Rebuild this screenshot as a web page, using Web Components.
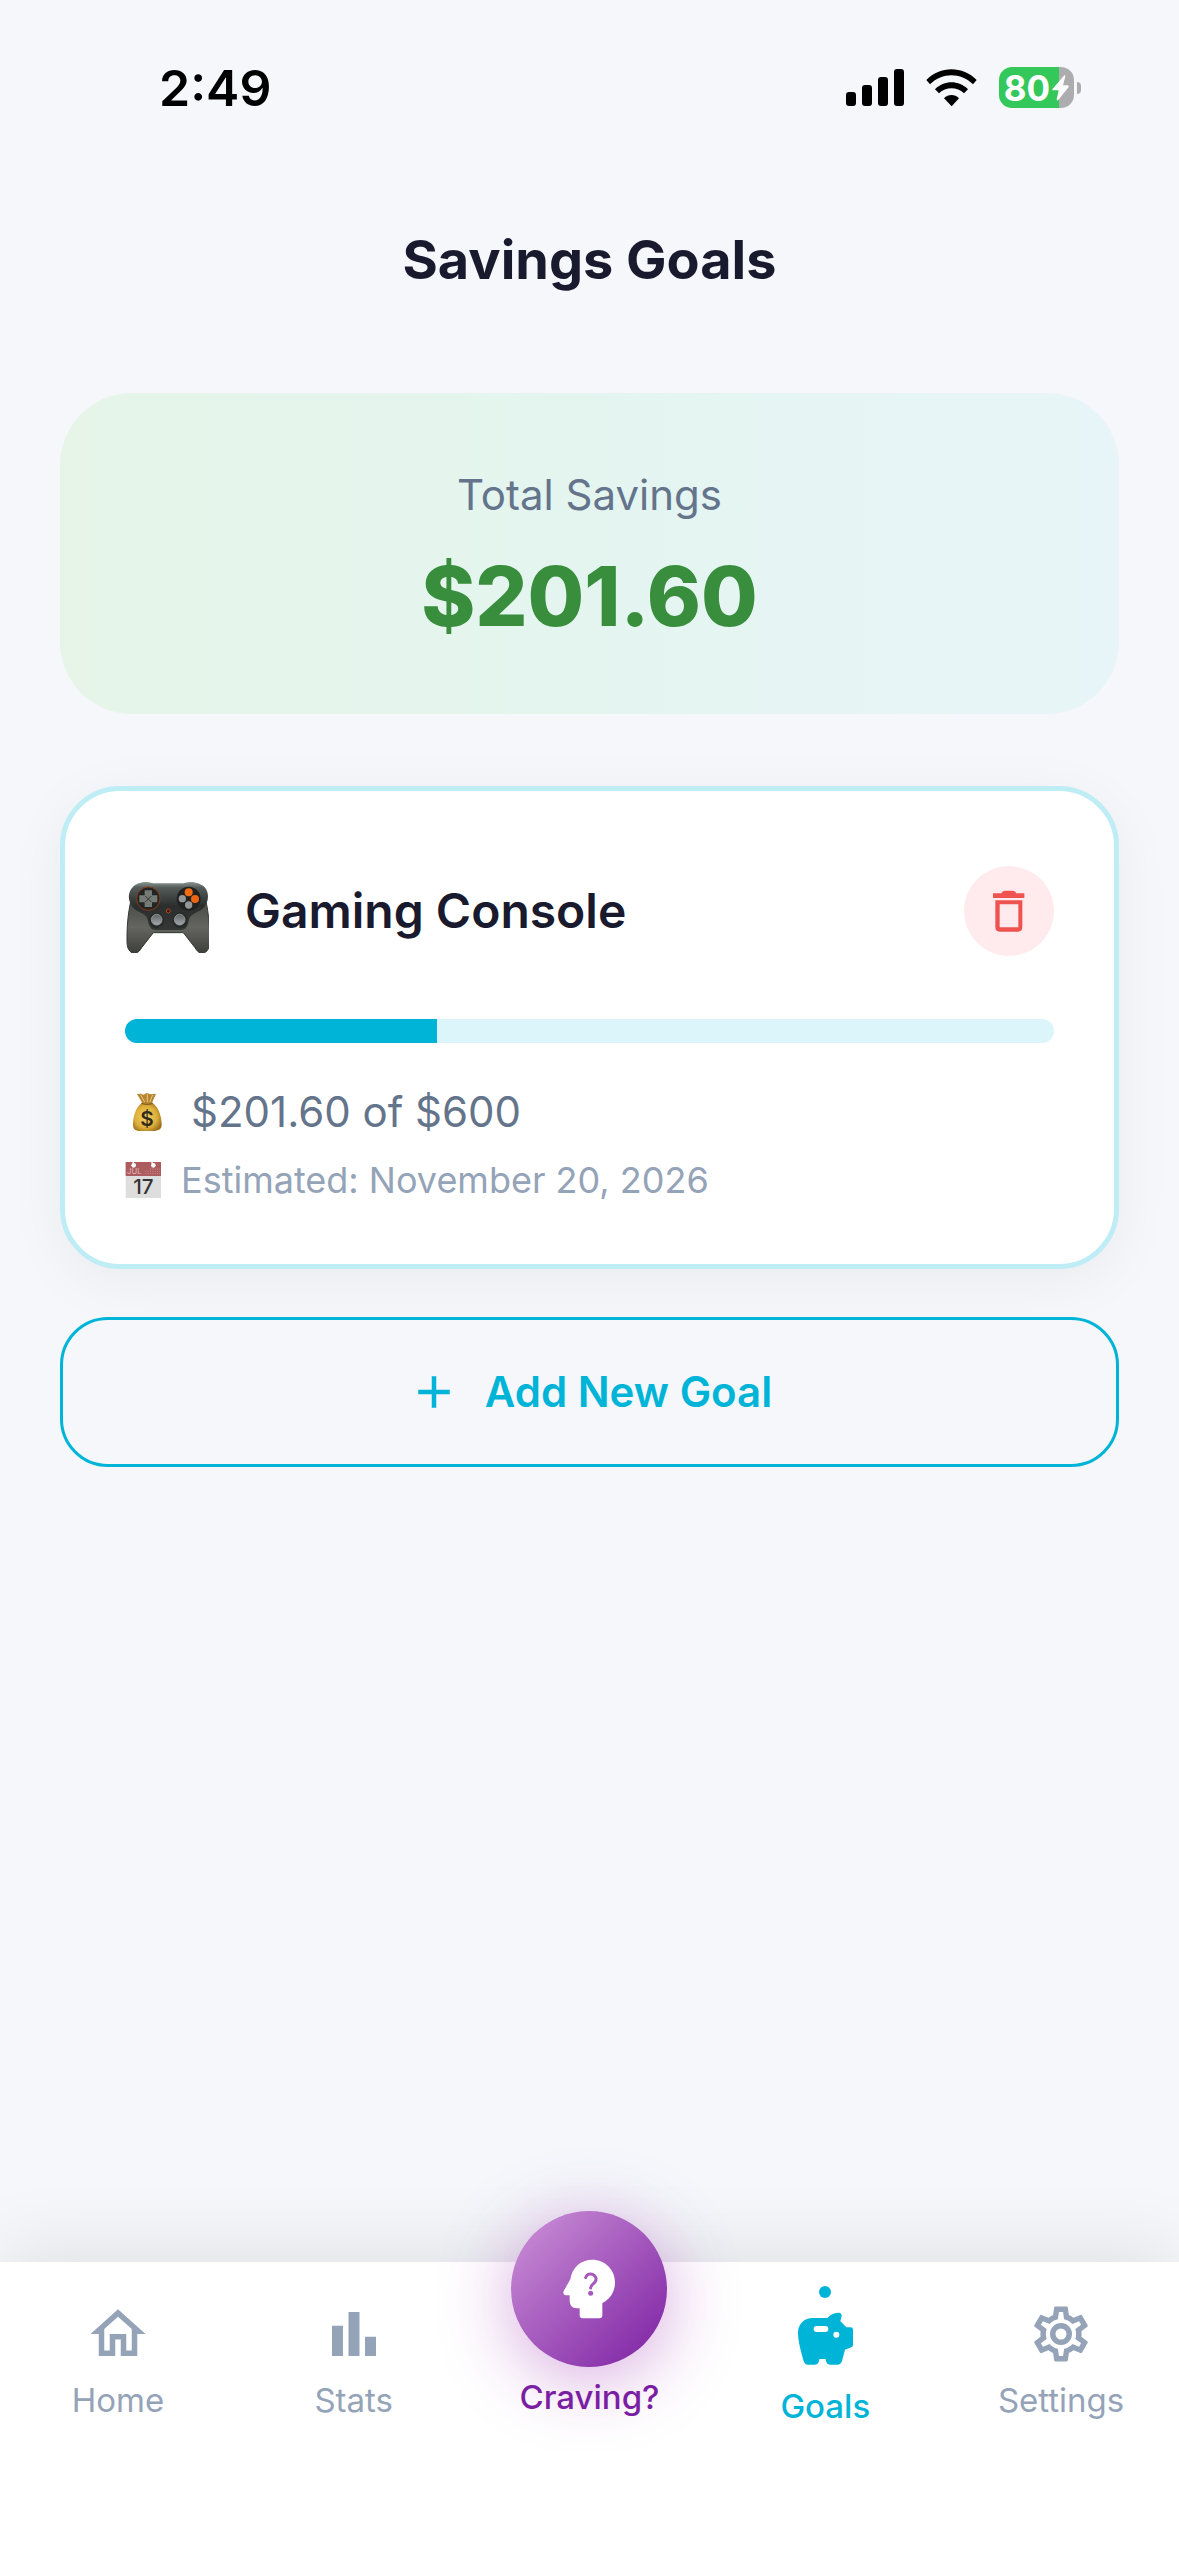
<!DOCTYPE html>
<html lang="en">
<head>
<meta charset="utf-8">
<meta name="viewport" content="width=device-width, initial-scale=1">
<title>Savings Goals</title>
<style>
    html {
        --bg: #f5f7fb;
        --ink: #1a1a2e;
        --slate: #64748b;
        --muted: #94a3b8;
        --accent: #00b4d8;
        --purple: #7b1fa2;
        --green: #388e3c;
        --gutter: 60px;
    }
    body {
        margin: 0;
        background: var(--bg);
        color: var(--ink);
        font-family: Inter, "Liberation Sans", sans-serif;
    }
</style>
</head>
<body>
<savings-app>
    <status-bar slot="status" time="2:49" battery="80"></status-bar>
    <span slot="title">Savings Goals</span>
    <total-card amount="$201.60">Total Savings</total-card>
    <goal-card icon="gamepad" value="201.60" max="600" saved="$201.60 of $600" estimate="Estimated: November 20, 2026">Gaming Console</goal-card>
    <add-button>Add New Goal</add-button>
    <tab-bar slot="tabs">
        <tab-item icon="home" href="#home">Home</tab-item>
        <tab-item icon="stats" href="#stats">Stats</tab-item>
        <tab-item icon="head" href="#craving" raised>Craving?</tab-item>
        <tab-item icon="piggy" href="#goals" active>Goals</tab-item>
        <tab-item icon="cog" href="#settings">Settings</tab-item>
    </tab-bar>
</savings-app>

<script>
const icons = {
    home: ['0 0 24 24', `<path fill="currentColor" d="M12 5.69L17 10.19V18H15V12H9V18H7V10.19L12 5.69M12 3L2 12H5V20H11V14H13V20H19V12H22"/>`],
    stats: ['0 0 24 24', `<path fill="currentColor" d="M4 9h4v11H4zM10 4h4v16h-4zM16 13h4v7h-4z"/>`],
    cog: ['0 0 24 24', `<path fill="currentColor" d="M12,8A4,4 0 0,1 16,12A4,4 0 0,1 12,16A4,4 0 0,1 8,12A4,4 0 0,1 12,8M12,10A2,2 0 0,0 10,12A2,2 0 0,0 12,14A2,2 0 0,0 14,12A2,2 0 0,0 12,10M10,22C9.75,22 9.54,21.82 9.5,21.58L9.13,18.93C8.5,18.68 7.96,18.34 7.44,17.94L4.95,18.95C4.73,19.03 4.46,18.95 4.34,18.73L2.34,15.27C2.21,15.05 2.27,14.78 2.46,14.63L4.57,12.97L4.5,12L4.57,11L2.46,9.37C2.27,9.22 2.21,8.95 2.34,8.73L4.34,5.27C4.46,5.05 4.73,4.96 4.95,5.05L7.44,6.05C7.96,5.66 8.5,5.32 9.13,5.07L9.5,2.42C9.54,2.18 9.75,2 10,2H14C14.25,2 14.46,2.18 14.5,2.42L14.87,5.07C15.5,5.32 16.04,5.66 16.56,6.05L19.05,5.05C19.27,4.96 19.54,5.05 19.66,5.27L21.66,8.73C21.79,8.95 21.73,9.22 21.54,9.37L19.43,11L19.5,12L19.43,13L21.54,14.63C21.73,14.78 21.79,15.05 21.66,15.27L19.66,18.73C19.54,18.95 19.27,19.04 19.05,18.95L16.56,17.95C16.04,18.34 15.5,18.68 14.87,18.93L14.5,21.58C14.46,21.82 14.25,22 14,22H10M11.25,4L10.88,6.61C9.68,6.86 8.62,7.5 7.85,8.39L5.44,7.35L4.69,8.65L6.8,10.2C6.4,11.37 6.4,12.64 6.8,13.8L4.68,15.36L5.43,16.66L7.86,15.62C8.63,16.5 9.68,17.14 10.87,17.38L11.24,20H12.76L13.13,17.39C14.32,17.14 15.37,16.5 16.14,15.62L18.57,16.66L19.32,15.36L17.2,13.81C17.6,12.64 17.6,11.37 17.2,10.2L19.31,8.65L18.56,7.35L16.15,8.39C15.38,7.5 14.32,6.86 13.12,6.62L12.75,4H11.25Z"/>`],
    plus: ['0 0 24 24', `<path fill="currentColor" d="M19 13h-6v6h-2v-6H5v-2h6V5h2v6h6z"/>`],
    trash: ['848 341 162 162', `<path fill="currentColor" fill-rule="evenodd" d="M881 369H906Q909 361 916 361H941Q948 361 951 369H975V383H881ZM888 390H969V470Q969 484 956 484H901Q888 484 888 470ZM901 402V471H957V402Z"/>`],
    head: ['442 201 252 252', `
        <path fill="currentColor" d="M578 239C544 239 517 262 512 298L492 333C489 340 493 346 499 346H510V361C510 376 518 385 531 385H540V406Q540 415 549 415H599Q608 415 608 406V369C631 358 646 335 646 307C646 269 616 239 578 239Z"/>
        <path fill="none" stroke="#a658bb" stroke-width="9" stroke-linecap="round" d="M558 293C562 280 574 281 579 283C589 287 592 298 586 306C580 313 573 315 573 324"/>
        <circle cx="573" cy="340" r="7.5" fill="#a658bb"/>`],
    piggy: ['126 201 198 198', `<path fill="currentColor" fill-rule="evenodd" d="M188 234H232C241 223 254 218 267 218Q275 219 275 228L271 244L289 262H302Q309 262 309 269V315Q309 320 304 322L285 329L276 363Q273 374 262 374H240Q228 374 227 357H208Q207 374 195 374H174Q164 374 161 363C155 342 144 305 144 278C144 252 163 234 188 234ZM200 258A8.500 8.500 0 0 0 200 276H226A8.500 8.500 0 0 0 226 258ZM259 275A9 9 0 1 0 259 293A9 9 0 1 0 259 275Z"/>`],
    gamepad: ['75 57 252 252', `
        <defs>
            <linearGradient id="grip" x1="0" y1="0" x2="0" y2="1"><stop offset="0" stop-color="#3a3d3a"/><stop offset=".6" stop-color="#64655f"/><stop offset="1" stop-color="#3d3f3b"/></linearGradient>
            <linearGradient id="body" x1="0" y1="0" x2="0" y2="1"><stop offset="0" stop-color="#8c9894"/><stop offset=".12" stop-color="#545b58"/><stop offset=".5" stop-color="#2b2e2d"/><stop offset="1" stop-color="#343736"/></linearGradient>
            <linearGradient id="stick" x1="0" y1="0" x2="0" y2="1"><stop offset="0" stop-color="#5c6264"/><stop offset="1" stop-color="#a5abac"/></linearGradient>
        </defs>
        <path fill="url(#grip)" stroke="#353733" stroke-width="3" d="M104 116C90 150 80 205 81 275C81 300 93 312 108 309C116 307 120 301 125 293L160 248H250L285 293C290 301 294 307 302 309C317 312 329 300 329 275C330 205 320 150 306 116Z"/>
        <path fill="url(#body)" d="M98 112C104 102 130 93 146 97L160 100H250L264 97C280 93 306 102 314 112C330 130 326 160 307 177C290 190 270 190 266 212C262 238 250 240 238 240H172C160 240 148 238 144 212C140 190 120 190 103 177C84 160 80 130 98 112Z"/>
        <circle cx="145" cy="146" r="35" fill="#222524" stroke="#973f13" stroke-width="2.500"/>
        <path fill="#747a76" d="M134 121H156V136H172V157H156V171H134V157H118V136H134Z"/>
        <path stroke="#313532" stroke-width="3" d="M136 138L154 156M154 138L136 156"/>
        <circle cx="266" cy="146" r="36" fill="#202221"/>
        <circle cx="266" cy="127" r="12" fill="#f36b13"/><circle cx="285" cy="147" r="12" fill="#ee6410"/>
        <circle cx="247" cy="146" r="11" fill="#949596"/><circle cx="266" cy="165" r="11" fill="#949596"/>
        <circle cx="205" cy="183" r="6" fill="#321b12" stroke="#b54a17" stroke-width="3"/>
        <circle cx="170" cy="211" r="23" fill="#272a29"/><circle cx="240" cy="211" r="23" fill="#272a29"/>
        <circle cx="170" cy="209" r="16" fill="url(#stick)" stroke="#8f9594" stroke-width="3"/>
        <circle cx="239" cy="209" r="16" fill="url(#stick)" stroke="#8f9594" stroke-width="3"/>`],
    money: ['75 63 126 126', `
        <defs>
            <radialGradient id="sack" cx=".45" cy=".5" r=".6"><stop offset="0" stop-color="#f4d564"/><stop offset=".65" stop-color="#dcae39"/><stop offset="1" stop-color="#9b6d1a"/></radialGradient>
        </defs>
        <path fill="#b78634" d="M111 72L122 71L130 74L141 69L151 73L168 71L156 99H127Z"/>
        <path fill="none" stroke="#ebc979" stroke-width="3" d="M122 75L134 96M142 73V96M158 75L149 96"/>
        <path fill="url(#sack)" d="M126 99H157C172 108 184 132 185 161C186 178 176 182 158 183H121C105 182 98 176 99 161C100 132 111 108 126 99Z"/>
        <path fill="none" stroke="#8a611f" stroke-width="4" stroke-linecap="round" d="M126 100Q141 106 157 100"/>
        <text x="141" y="167" text-anchor="middle" font-size="62" font-weight="600" fill="#33291d">$</text>`],
    calendar: ['76 276 108 108', `
        <path fill="#dedede" d="M78 276H185V384H78Z"/>
        <path fill="#ac5b5e" d="M78 276H185V318H78Z"/>
        <circle cx="102" cy="286" r="7" fill="#fff"/><circle cx="161" cy="286" r="7" fill="#fff"/>
        <path stroke="#fff" stroke-width="4" d="M101 276V286M156 276L161 286"/>
        <path stroke="#c98b8d" stroke-width="3" stroke-dasharray="3 4" d="M137 311H181M137 304H181M151 297H181"/>
        <text x="104" y="312" text-anchor="middle" font-size="23" fill="#e2b9ba">JUL</text>
        <text x="131" y="373" text-anchor="middle" font-size="62" font-weight="500" fill="#333">17</text>`],
    signal: ['0 0 58 38', `<rect y="23" width="10" height="14" rx="3"/><rect x="16" y="16" width="10" height="21" rx="3"/><rect x="32" y="8" width="10" height="29" rx="3"/><rect x="48" width="10" height="37" rx="3"/>`],
    wifi: ['318 86 153 114', `
        <path d="M319 119C360 76 429 76 470 119L459 132C422 96 367 96 330 132Z"/>
        <path d="M345 147C373 119 416 119 444 147L432 159C411 139 378 139 357 159Z"/>
        <path d="M372 174C385 161 404 161 417 174L395 198Z"/>`],
    bolt: ['697 107 51 76', `<path fill="#fff" d="M734 107L698 149Q697 152 701 152H717L711 179Q711 184 716 181L747 142Q748 138 744 137H730L737 110Q737 105 734 107Z"/>`],
};

class BaseElement extends HTMLElement {
    constructor() {
        super();
        this.attachShadow({ mode: 'open' });
    }
    connectedCallback() {
        this.shadowRoot.innerHTML = `<style>* { box-sizing: border-box; }${this.css()}</style>${this.html()}`;
    }
    attr(name) {
        return this.getAttribute(name) || '';
    }
}

customElements.define('app-icon', class extends BaseElement {
    css() {
        return `
            :host { display: block; flex: none; }
            svg { display: block; width: 100%; height: 100%; }
        `;
    }
    html() {
        const [box, shapes] = icons[this.attr('name')];
        return `<svg viewBox="${box}" aria-hidden="true">${shapes}</svg>`;
    }
});

customElements.define('savings-app', class extends BaseElement {
    css() {
        return `
            :host { display: flex; flex-direction: column; min-height: 100vh; }
            header { padding: 50px var(--gutter) 46px; }
            h1 { margin: 0; font-size: 54px; line-height: 66px; font-weight: 700; text-align: center; }
            main { flex: 1; display: flex; flex-direction: column; padding: 54px var(--gutter); }
        `;
    }
    html() {
        return `
            <slot name="status"></slot>
            <header><h1><slot name="title"></slot></h1></header>
            <main><slot></slot></main>
            <slot name="tabs"></slot>
        `;
    }
});

customElements.define('status-bar', class extends BaseElement {
    css() {
        return `
            :host {
                display: flex;
                align-items: center;
                justify-content: space-between;
                height: 177px;
                padding: 0 98px 2px 159px;
                box-sizing: border-box;
                color: #000;
            }
            time { font-size: 50px; line-height: 60px; font-weight: 600; }
            .side { display: flex; align-items: center; }
            .signal { width: 58px; height: 38px; margin-right: 22px; }
            .wifi { width: 51px; height: 38px; margin-right: 22px; }
            .battery {
                display: flex;
                align-items: center;
                justify-content: center;
                gap: 2px;
                width: 75px;
                height: 41px;
                border-radius: 13px;
                background: linear-gradient(90deg, #34c759 80%, #adadaf 80%);
                color: #fff;
                font-size: 35px;
                font-weight: 700;
            }
            .bolt { width: 17px; height: 26px; }
            .nub { width: 4px; height: 12px; margin-left: 3px; border-radius: 0 6px 6px 0; background: #adadaf; }
        `;
    }
    html() {
        return `
            <time>${this.attr('time')}</time>
            <div class="side">
                <app-icon class="signal" name="signal"></app-icon>
                <app-icon class="wifi" name="wifi"></app-icon>
                <div class="battery"><span>${this.attr('battery')}</span><app-icon class="bolt" name="bolt"></app-icon></div>
                <div class="nub"></div>
            </div>
        `;
    }
});

customElements.define('total-card', class extends BaseElement {
    css() {
        return `
            :host {
                display: flex;
                flex-direction: column;
                align-items: center;
                gap: 21px;
                padding: 72px 60px 66px;
                border-radius: 72px;
                background: linear-gradient(90deg, #e6f5e8, #e4f5f0 50%, #e8f5f8);
            }
            .label { font-size: 42px; line-height: 60px; color: var(--slate); }
            .amount { font-size: 82px; line-height: 102px; font-weight: 800; color: var(--green); }
        `;
    }
    html() {
        return `
            <div class="label"><slot></slot></div>
            <div class="amount">${this.attr('amount')}</div>
        `;
    }
});

customElements.define('goal-card', class extends BaseElement {
    css() {
        return `
            :host {
                display: block;
                margin-top: 72px;
                padding: 60px;
                border: 5px solid #bfedf5;
                border-radius: 60px;
                background: #fff;
                box-shadow: 0 12px 60px rgba(0, 0, 0, 0.05);
            }
            .head { display: flex; align-items: center; gap: 36px; min-height: 120px; }
            .picture { width: 84px; height: 84px; }
            h2 { flex: 1; margin: 0; font-size: 48px; line-height: 60px; font-weight: 600; }
            button {
                display: grid;
                place-items: center;
                width: 90px;
                height: 90px;
                padding: 0;
                border: 0;
                border-radius: 50%;
                background: #ffebee;
                color: #ef5350;
            }
            button app-icon { width: 54px; height: 54px; }
            progress {
                display: block;
                width: 100%;
                height: 24px;
                margin: 48px 0 39px;
                border-radius: 12px;
                overflow: hidden;
                appearance: none;
            }
            progress::-webkit-progress-bar { background: #dcf5fa; }
            progress::-webkit-progress-value { background: var(--accent); }
            .row { display: flex; align-items: center; }
            .saved { gap: 24px; font-size: 42px; line-height: 60px; color: var(--slate); }
            .saved app-icon { width: 42px; height: 42px; }
            .estimate { gap: 20px; margin-top: 14px; font-size: 36px; line-height: 48px; color: var(--muted); }
            .estimate app-icon { width: 36px; height: 36px; }
        `;
    }
    html() {
        return `
            <div class="head">
                <app-icon class="picture" name="${this.attr('icon')}"></app-icon>
                <h2><slot></slot></h2>
                <button type="button" aria-label="Delete goal"><app-icon name="trash"></app-icon></button>
            </div>
            <progress value="${this.attr('value')}" max="${this.attr('max')}" aria-label="Goal progress"></progress>
            <div class="row saved"><app-icon name="money"></app-icon><span>${this.attr('saved')}</span></div>
            <div class="row estimate"><app-icon name="calendar"></app-icon><span>${this.attr('estimate')}</span></div>
        `;
    }
});

customElements.define('add-button', class extends BaseElement {
    css() {
        return `
            :host { display: block; margin-top: 48px; }
            button {
                display: flex;
                align-items: center;
                justify-content: center;
                gap: 24px;
                width: 100%;
                min-height: 150px;
                border: 3px solid var(--accent);
                border-radius: 48px;
                background: var(--bg);
                color: var(--accent);
                font: 600 42px/60px Inter, "Liberation Sans", sans-serif;
            }
            app-icon { width: 54px; height: 54px; }
        `;
    }
    html() {
        return `<button type="button"><app-icon name="plus"></app-icon><span><slot></slot></span></button>`;
    }
});

customElements.define('tab-bar', class extends BaseElement {
    css() {
        return `
            :host { display: block; background: #fff; box-shadow: 0 -12px 72px rgba(0, 0, 0, 0.09); }
            nav { display: grid; grid-template-columns: repeat(5, 1fr); padding-bottom: 130px; }
        `;
    }
    html() {
        return `<nav><slot></slot></nav>`;
    }
});

customElements.define('tab-item', class extends BaseElement {
    css() {
        return `
            :host { display: block; color: var(--muted); font-size: 33px; line-height: 40px; }
            a {
                display: flex;
                flex-direction: column;
                align-items: center;
                gap: 13px;
                padding-top: 39px;
                color: inherit;
                text-decoration: none;
            }
            .glyph { width: 66px; height: 66px; }
            :host([active]) { color: var(--accent); font-weight: 500; }
            :host([active]) a { padding-top: 45px; }
            /* small marker above the current tab */
            :host([active]) a::before {
                content: "";
                width: 12px;
                height: 12px;
                margin: -21px 0 -4px;
                border-radius: 50%;
                background: currentColor;
            }
            :host([raised]) { color: var(--purple); font-weight: 500; }
            :host([raised]) a { gap: 10px; margin-top: -51px; padding-top: 0; }
            .ball {
                display: grid;
                place-items: center;
                width: 156px;
                height: 156px;
                border-radius: 50%;
                background: linear-gradient(135deg, #ce93d8, #7b1fa2);
                box-shadow: 0 12px 72px rgba(156, 39, 176, 0.4);
                color: #fff;
            }
            .ball app-icon { width: 84px; height: 84px; }
        `;
    }
    html() {
        const name = this.attr('icon');
        const glyph = this.hasAttribute('raised')
            ? `<div class="ball"><app-icon name="${name}"></app-icon></div>`
            : `<app-icon class="glyph" name="${name}"></app-icon>`;
        return `<a href="${this.attr('href')}">${glyph}<span><slot></slot></span></a>`;
    }
});
</script>
</body>
</html>
